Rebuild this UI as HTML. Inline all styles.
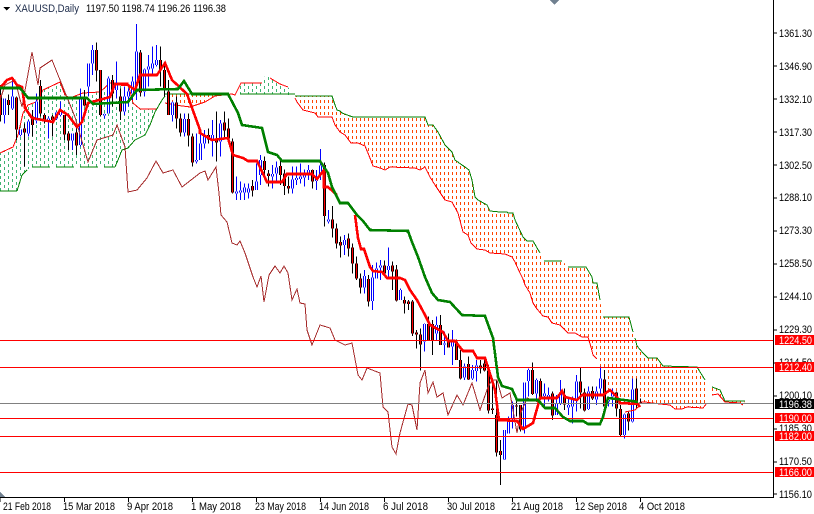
<!DOCTYPE html>
<html><head><meta charset="utf-8"><title>XAUUSD,Daily</title>
<style>
html,body{margin:0;padding:0;background:#fff;width:814px;height:514px;overflow:hidden}
svg{display:block;position:absolute;left:0;top:0}
text{font-family:"Liberation Sans",sans-serif;font-size:11px;fill:#000}
.w{fill:none;stroke-width:3}
.wb{stroke:#00f}.wr{stroke:#000}
.bo{fill:none;stroke:#00f;stroke-width:9}.bi{fill:none;stroke:#fff;stroke-width:3}
.ro{fill:none;stroke:#000;stroke-width:9}.ri{fill:none;stroke:#f00;stroke-width:3}
</style></head><body>
<svg width="814" height="514" viewBox="0 0 814 514" shape-rendering="crispEdges">
<defs>
<pattern id="po" width="4" height="6" patternUnits="userSpaceOnUse" patternTransform="translate(0,4)"><rect x="0" y="0" width="1" height="3" fill="#ff4500"/></pattern>
<pattern id="pg" width="8" height="6" patternUnits="userSpaceOnUse" patternTransform="translate(0,2)"><rect x="0" y="0" width="1" height="3" fill="#3cb371"/><rect x="4" y="3" width="1" height="3" fill="#3cb371"/></pattern>
<path id="b1" d="M13.5 295V345M37.5 290V325M61.5 388V405M85.5 365V400M109.5 305V362M145.5 355V365M169.5 337V355M181.5 333V345M217.5 400V422M241.5 295V435M265.5 190V260M277.5 150V190M313.5 342V346M325.5 236V340M349.5 250V270M373.5 290V335M385.5 275V290M397.5 245V280M409.5 155V255M433.5 208V275M445.5 200V208M457.5 190V205M469.5 180V195M517.5 307V345M553.5 357V397M589.5 480V485M601.5 430V480M613.5 405V430M637.5 405V420M661.5 370V425M709.5 575V580M721.5 572V578M733.5 562V578M745.5 565V578M769.5 545V570M781.5 480V525"/>
<path id="r1" d="M1.5 285V345M25.5 300V315M49.5 293V388M73.5 385V398M97.5 350V375M121.5 258V340M133.5 345V362M157.5 350V360M193.5 345V403M205.5 400V422M229.5 397V437M253.5 295V317M289.5 150V212M301.5 210V345M337.5 240V280M361.5 290V335M421.5 157V277M481.5 180V210M493.5 210V270M505.5 275V345M529.5 307V355M541.5 355V397M565.5 357V407M577.5 410V487M625.5 405V418M649.5 415V428M673.5 368V392M685.5 385V415M697.5 425V578M757.5 558V572M793.5 483V510M805.5 520V528"/>
<path id="b2" d="M217.5 132V140M229.5 112V130M277.5 148V176M289.5 144V150M301.5 140V147M313.5 130V143M325.5 120V130M349.5 145V153M361.5 107V135M385.5 268V274M433.5 330V345M493.5 438V472M517.5 442V513M529.5 415V445M541.5 406V412M565.5 408V420M601.5 480V510"/>
<path id="r2" d="M241.5 108V135M253.5 130V168M265.5 168V176M337.5 120V155M373.5 105V258M397.5 268V295M409.5 295V340M421.5 336V346M445.5 325V355M457.5 352V400M469.5 400V445M481.5 445V472M505.5 447V515M553.5 406V430M577.5 406V425M589.5 418V512"/>
<path id="b3" d="M133.5 72V125M169.5 75V100M193.5 130V133M217.5 125V140M253.5 200V232M277.5 210V235M289.5 197V213M373.5 390V478M385.5 355V400M397.5 315V355M433.5 247V385M445.5 210V243M469.5 240V280M493.5 280V288M505.5 285V292M529.5 310V345M541.5 285V310"/>
<path id="r3" d="M73.5 0V10M85.5 5V12M97.5 5V100M109.5 98V103M121.5 103V133M145.5 72V122M157.5 72V122M181.5 75V135M205.5 122V142M229.5 125V180M241.5 180V235M265.5 192V238M301.5 197V205M313.5 190V212M325.5 212V332M337.5 326V330M349.5 345V457M361.5 453V465M409.5 317V319M421.5 315V388M457.5 210V282M481.5 243V290M517.5 280V347"/>
<path id="b4" d="M1.5 250V280M25.5 285V292M37.5 265V290M49.5 215V270M85.5 245V297M109.5 245V268M121.5 205V235M145.5 270V275M157.5 248V260M193.5 313V375M217.5 238V335"/>
<path id="r4" d="M13.5 255V283M61.5 215V248M73.5 248V302M97.5 243V265M133.5 208V290M169.5 248V295M181.5 297V375M205.5 310V335M229.5 235V280M241.5 277V280"/>
</defs>

<!-- clouds -->
<polygon fill="url(#pg)" points="0,153 13,147 18,135 23,113 28,105 36,102 43,90 60,82 65,95 70,98 83,93 100,92 110,83 128,83 133,103 140,109 157,109 165,96 162,100 155,112 150,125 145,135 135,140 128,148 122,150 118,160 115,167 32,167 27,170 22,175 17,191 0,191"/>
<polygon fill="url(#pg)" points="238,94 241,83 262,83 265,76 272,78 280,84 288,87 295,95"/>
<polygon fill="url(#po)" points="165,94 228,94 232,94 215,96 205,102 190,107 175,105 165,103"/>
<polygon fill="url(#po)" points="295,96 332,96 335,105 337,110 340,111 342,113 350,116 353,117 425,117 428,125 433,125 438,132 445,145 452,152 455,160 462,165 465,167 469,170 472,180 475,197 478,200 487,205 490,211 500,212 507,212 508,213 513,213 515,220 523,237 527,241 533,241 540,253 544,261 562,261 568,267 586,267 592,277 593,283 597,283 600,300 603,317 629,317 633,332 635,338 637,346 643,353 648,358 657,358 663,366 697,367 705,380 707,403 703,408 687,407 682,409 675,409 670,405 660,404 645,402 640,402 620,403 600,380 597,359 593,355 591,347 588,337 582,337 575,333 568,333 560,325 552,323 548,317 543,316 537,309 533,303 530,293 525,285 523,279 520,273 515,262 512,257 505,254 490,253 485,250 477,249 471,243 468,235 463,232 458,213 452,202 445,200 435,185 430,177 425,167 420,170 415,168 390,167 385,170 380,168 373,166 370,158 365,146 358,143 351,143 345,135 340,132 335,125 332,117 318,117 315,113 303,110 297,102"/>
<polygon fill="url(#po)" points="712,387 720,390 725,401 745,401 743,405 740,403 725,402 718,394 712,395"/>

<!-- cloud edges -->
<g fill="none" stroke-width="1">
<polyline stroke="#008000" points="295,96 332,96 335,105 337,110 340,111 342,113 350,116 353,117 425,117 428,125 433,125 438,132 445,145 452,152 455,160 462,165 465,167 469,170 472,180 475,197 478,200 487,205 490,211 500,212 507,212 508,213 513,213 515,220 523,237 527,241 533,241 540,253"/>
<polyline stroke="#008000" points="544,261 562,261"/><polyline stroke="#008000" points="568,267 586,267 592,277 593,283 597,283 600,300"/>
<polyline stroke="#008000" points="603,317 629,317 633,332"/><polyline stroke="#008000" points="635,338 637,346 643,353 648,358 657,358 663,366 697,367 705,380"/>
<polyline stroke="#008000" points="712,387 720,390 725,401 745,401"/>
<polyline stroke="#f00" points="270,78 280,84 288,87"/>
<polyline stroke="#f00" points="295,98 297,102 303,110 315,113 318,117 332,117 335,125 340,132 345,135 351,143 358,143 365,146 370,158 373,166 380,168 385,170 390,167 415,168 420,170 425,167 430,177 435,185 445,200 452,202 458,213 463,232 468,235 471,243 477,249 485,250 490,253 505,254 512,257 515,262 520,273 523,279 525,285 530,293 533,303 537,309 543,316 548,317 552,323 560,325 568,333 575,333 582,337 588,337 591,347 593,355 597,359"/>
<polyline stroke="#f00" points="640,402 645,402 660,404 670,405 675,409 682,409 687,407 703,408 707,403"/>
<polyline stroke="#f00" points="712,395 718,394 725,402 740,403 743,405"/>
<polyline stroke="#f00" points="165,103 175,105 190,107 205,102 215,96 232,94 235,95 241,83 262,83"/>
<polyline stroke="#f00" points="0,153 13,147 18,135 23,113 28,105 36,102 43,90 60,82 65,95 70,98 83,93 100,92 110,83 128,83 133,103 140,109 157,109"/>
<polyline stroke="#008000" points="165,96 162,100 155,112 150,125 145,135 135,140 128,148 122,150 118,160 115,167"/>
<path stroke="#008000" d="M0 191H17M17 191L22 175M22 175L27 170M32 167H50M56 167H74M80 167H98M104 167H115M240 94H295M165 94H228"/>
</g>

<!-- candles -->
<g fill="none" transform="scale(0.33333)">
<path class="wb" style="stroke-width:3" d="M13.5 295V370M37.5 240V330M61.5 388V410M85.5 360V410M109.5 280V370M145.5 350V415M169.5 335V360M181.5 305V350M217.5 400V450M241.5 265V440M265.5 190V290M277.5 135V225M313.5 340V355M325.5 230V340M349.5 185V295M373.5 260V345M385.5 265V320M397.5 230V300M409.5 72V300M433.5 205V290M445.5 165V260M457.5 140V230M469.5 135V200M517.5 305V365M553.5 340V410M589.5 400V490M601.5 390V475M613.5 390V445M637.5 360V470M661.5 360V470M709.5 530V600M721.5 545V600M733.5 550V600M745.5 550V595M769.5 490V570M781.5 465V555"/>
<path class="wr" style="stroke-width:3" d="M1.5 255V365M25.5 283V345M49.5 290V420M73.5 370V500M97.5 330V410M121.5 240V350M133.5 340V370M157.5 345V410M193.5 345V420M205.5 395V450M229.5 370V465M253.5 270V320M289.5 128V245M301.5 210V350M337.5 225V320M361.5 265V360M421.5 150V290M481.5 140V260M493.5 190V290M505.5 240V345M529.5 290V385M541.5 340V410M565.5 340V440M577.5 400V500M625.5 385V430M649.5 335V485M673.5 335V415M685.5 355V425M697.5 415V580M757.5 540V590M793.5 470V525M805.5 510V560"/>
<use href="#b1" class="bo"/><use href="#b1" class="bi"/>
<use href="#r1" class="ro"/><use href="#r1" class="ri"/>
</g>
<g fill="none" transform="translate(200,130) scale(0.33333)">
<path class="wb" style="stroke-width:3" d="M217.5 105V175M229.5 95V155M277.5 110V190M289.5 110V165M301.5 100V160M313.5 118V170M325.5 105V150M349.5 120V180M361.5 57V150M385.5 240V280M433.5 315V375M493.5 420V490M517.5 405V540M529.5 398V445M541.5 390V450M565.5 352V445M601.5 475V510"/>
<path class="wr" style="stroke-width:3" d="M241.5 90V165M253.5 118V195M265.5 140V190M337.5 118V175M373.5 98V290M397.5 228V322M409.5 280V355M421.5 320V382M445.5 310V380M457.5 340V430M469.5 380V450M481.5 430V490M505.5 435V530M553.5 392V435M577.5 395V480M589.5 405V515"/>
<use href="#b2" class="bo"/><use href="#b2" class="bi"/>
<use href="#r2" class="ro"/><use href="#r2" class="ri"/>
</g>
<g fill="none" transform="translate(380,300) scale(0.33333)">
<path class="wb" style="stroke-width:3" d="M133.5 70V155M169.5 50V120M193.5 95V165M217.5 90V195M253.5 190V240M277.5 195V240M289.5 180V245M373.5 390V480M385.5 350V400M397.5 305V385M433.5 247V400M445.5 205V290M469.5 235V300M493.5 250V320M505.5 262V305M529.5 285V345M541.5 240V315"/>
<path class="wr" style="stroke-width:3" d="M73.5 -10V40M85.5 0V30M97.5 0V108M109.5 90V145M121.5 85V212M145.5 50V123M157.5 60V165M181.5 45V135M205.5 100V142M229.5 118V180M241.5 150V238M265.5 170V240M301.5 180V220M313.5 170V215M325.5 195V340M337.5 240V342M349.5 240V470M361.5 420V555M409.5 305V350M421.5 315V395M457.5 188V285M481.5 235V300M517.5 275V360"/>
<use href="#b3" class="bo"/><use href="#b3" class="bi"/>
<use href="#r3" class="ro"/><use href="#r3" class="ri"/>
</g>
<g fill="none" transform="translate(560,310) scale(0.33333)">
<path class="wb" style="stroke-width:3" d="M1.5 210V280M25.5 260V315M37.5 260V340M49.5 195V305M85.5 230V300M109.5 230V285M121.5 170V250M145.5 260V290M157.5 235V290M193.5 310V385M217.5 205V337"/>
<path class="wr" style="stroke-width:3" d="M13.5 235V300M61.5 172V295M73.5 235V305M97.5 230V270M133.5 180V290M169.5 245V320M181.5 285V378M205.5 305V362M229.5 205V295M241.5 265V280"/>
<use href="#b4" class="bo"/><use href="#b4" class="bi"/>
<use href="#r4" class="ro"/><use href="#r4" class="ri"/>
</g>

<!-- chikou -->
<polyline fill="none" stroke="#a52a2a" stroke-width="1" points="0,100 5,85 15,80 22,107 32,52 38,85 40,68 52,60 58,75 75,117 88,162 97,140 113,135 117,125 125,147 128,192 137,190 147,178 156,161 163,173 173,170 182,187 200,173 205,171 208,180 216,167 219,193 221,215 227,222 232,243 237,245 240,241 245,253 253,277 257,287 261,276 264,302 269,275 275,266 280,273 284,266 288,273 292,300 297,289 300,303 305,304 307,330 312,345 320,325 330,328 335,340 345,345 352,343 358,375 362,380 367,368 380,373 383,407 388,412 392,447 396,454 400,433 408,404 412,405 417,430 420,383 425,370 428,393 433,382 437,397 443,393 448,415 457,395 463,405 472,383 480,410 488,387 492,380 497,380 502,398 510,393 517,433 520,415 527,398 538,402"/>

<!-- horizontal lines -->
<rect x="0" y="403" width="773" height="1" fill="#808080"/>
<g fill="#f00">
<rect x="0" y="340" width="773" height="1"/>
<rect x="0" y="367" width="773" height="1"/>
<rect x="0" y="418" width="773" height="1"/>
<rect x="0" y="436" width="773" height="1"/>
<rect x="0" y="472" width="773" height="1"/>
</g>

<!-- tenkan -->
<polyline fill="none" stroke="#f00" stroke-width="2.6" points="0,88 7,80 12,78 17,85 22,87 25,108 32,118 53,122 60,110 68,115 77,127 82,122 88,103 110,97 115,84 128,85 135,90 140,75 157,75 165,63 172,80 187,94 200,130 200,133 212,140 228,138 233,155 243,158 248,161 257,161 267,182 282,182 287,174 312,174 317,179 324,170 324,187 328,187 337,195"/>
<polyline fill="none" stroke="#f00" stroke-width="2.6" points="355,215 358,238 361,249 364,249 370,267 373,271 382,272 387,278 400,278 405,280 410,290 417,300 425,315 430,325 443,332 448,341 455,341 463,351 473,351 477,358 485,358 492,380 495,390 499,420 517,421 523,429 533,423 540,398 557,398 562,391 565,397 577,400 582,395 603,395 610,390 617,397 620,403 638,404 640,407"/>
<polyline fill="none" stroke="#f00" stroke-width="1" points="625,412 635,410 640,405"/>

<!-- kijun -->
<polyline fill="none" stroke="#008000" stroke-width="2.6" points="0,88 20,88 28,98 87,98 93,104 128,102 137,90 178,89 184,81 192,94 228,94 238,113 242,125 262,128 268,152 277,155 282,161 320,161 328,173 332,187 340,203 348,203 357,215 363,221 370,230 408,231 412,242 418,257 425,277 432,293 438,300 450,302 462,315 485,316 493,338 498,377 502,386 512,389 517,400 538,400 545,408 555,408 563,417 570,421 583,421 588,424 600,424 603,417 608,398 632,401 638,402"/>

<!-- axes -->
<rect x="773" y="0" width="1" height="498" fill="#000"/>
<rect x="0" y="497" width="773" height="1" fill="#000"/>
<polygon points="550,0 559,0 554.5,5" fill="#708090"/>
<polygon points="0,492 5,497 0,497" fill="#708090"/>
<polygon points="3,7 10,7 6.5,10.5" fill="#000"/>
<path fill="none" stroke="#000" d="M774 33h3M774 66h3M774 99h3M774 132h3M774 165h3M774 198h3M774 231h3M774 264h3M774 297h3M774 330h3M774 363h3M774 396h3M774 429h3M774 462h3M774 494h3M0 498v4M64.500 498v4M128.500 498v4M192.500 498v4M256.500 498v4M320.500 498v4M384.500 498v4M448.500 498v4M512.500 498v4M576.500 498v4M640.500 498v4"/>
</svg>

<svg width="814" height="514" viewBox="0 0 814 514">
<text x="15" y="12" textLength="64" lengthAdjust="spacingAndGlyphs" style="fill:#1c2b4a">XAUUSD,Daily</text>
<text x="86" y="12" textLength="140" lengthAdjust="spacingAndGlyphs">1197.50 1198.74 1196.26 1196.38</text>

<g>
<text x="779" y="37" textLength="33" lengthAdjust="spacingAndGlyphs">1361.30</text>
<text x="779" y="70" textLength="33" lengthAdjust="spacingAndGlyphs">1346.90</text>
<text x="779" y="103" textLength="33" lengthAdjust="spacingAndGlyphs">1332.10</text>
<text x="779" y="136" textLength="33" lengthAdjust="spacingAndGlyphs">1317.30</text>
<text x="779" y="169" textLength="33" lengthAdjust="spacingAndGlyphs">1302.50</text>
<text x="779" y="201" textLength="33" lengthAdjust="spacingAndGlyphs">1288.10</text>
<text x="779" y="234" textLength="33" lengthAdjust="spacingAndGlyphs">1273.30</text>
<text x="779" y="267" textLength="33" lengthAdjust="spacingAndGlyphs">1258.50</text>
<text x="779" y="300" textLength="33" lengthAdjust="spacingAndGlyphs">1244.10</text>
<text x="779" y="333" textLength="33" lengthAdjust="spacingAndGlyphs">1229.30</text>
<text x="779" y="366" textLength="33" lengthAdjust="spacingAndGlyphs">1214.50</text>
<text x="779" y="399" textLength="33" lengthAdjust="spacingAndGlyphs">1200.10</text>
<text x="779" y="432" textLength="33" lengthAdjust="spacingAndGlyphs">1185.30</text>
<text x="779" y="465" textLength="33" lengthAdjust="spacingAndGlyphs">1170.50</text>
<text x="779" y="498" textLength="33" lengthAdjust="spacingAndGlyphs">1156.10</text>
</g>

<rect x="775" y="335" width="39" height="10" fill="#f00"/>
<rect x="775" y="362" width="39" height="10" fill="#f00"/>
<rect x="775" y="399" width="39" height="10" fill="#000"/>
<rect x="775" y="413" width="39" height="10" fill="#f00"/>
<rect x="775" y="431" width="39" height="10" fill="#f00"/>
<rect x="775" y="467" width="39" height="10" fill="#f00"/>
<text x="779" y="344" textLength="33" lengthAdjust="spacingAndGlyphs" style="fill:#fff">1224.50</text>
<text x="779" y="371" textLength="33" lengthAdjust="spacingAndGlyphs" style="fill:#fff">1212.40</text>
<text x="779" y="408" textLength="33" lengthAdjust="spacingAndGlyphs" style="fill:#fff">1196.38</text>
<text x="779" y="422" textLength="33" lengthAdjust="spacingAndGlyphs" style="fill:#fff">1190.00</text>
<text x="779" y="440" textLength="33" lengthAdjust="spacingAndGlyphs" style="fill:#fff">1182.00</text>
<text x="779" y="476" textLength="33" lengthAdjust="spacingAndGlyphs" style="fill:#fff">1166.00</text>

<text x="3" y="510" textLength="48" lengthAdjust="spacingAndGlyphs">21 Feb 2018</text>
<text x="63" y="510" textLength="52" lengthAdjust="spacingAndGlyphs">15 Mar 2018</text>
<text x="127" y="510" textLength="46" lengthAdjust="spacingAndGlyphs">9 Apr 2018</text>
<text x="191" y="510" textLength="50" lengthAdjust="spacingAndGlyphs">1 May 2018</text>
<text x="255" y="510" textLength="51" lengthAdjust="spacingAndGlyphs">23 May 2018</text>
<text x="319" y="510" textLength="50" lengthAdjust="spacingAndGlyphs">14 Jun 2018</text>
<text x="383" y="510" textLength="45" lengthAdjust="spacingAndGlyphs">6 Jul 2018</text>
<text x="447" y="510" textLength="48" lengthAdjust="spacingAndGlyphs">30 Jul 2018</text>
<text x="511" y="510" textLength="52" lengthAdjust="spacingAndGlyphs">21 Aug 2018</text>
<text x="575" y="510" textLength="52" lengthAdjust="spacingAndGlyphs">12 Sep 2018</text>
<text x="639" y="510" textLength="46" lengthAdjust="spacingAndGlyphs">4 Oct 2018</text>
</svg>
</body></html>
